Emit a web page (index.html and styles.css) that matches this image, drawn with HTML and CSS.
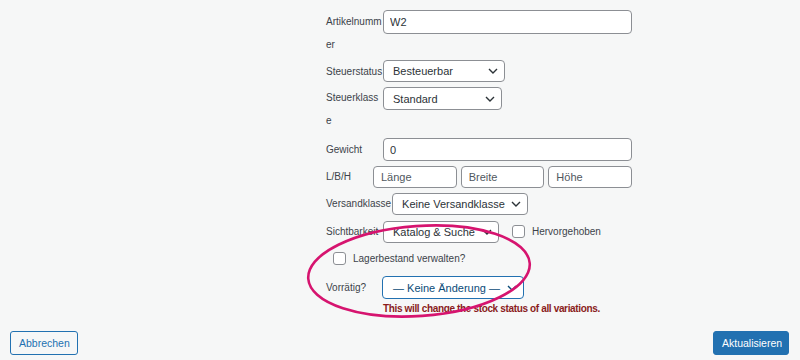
FILE: index.html
```html
<!DOCTYPE html>
<html lang="de">
<head>
<meta charset="utf-8">
<title>Variationen bearbeiten</title>
<link rel="stylesheet" href="styles.css">
</head>
<body>
<div class="page">
  <div class="form">
    <div class="row row--top row--sku">
      <label class="lbl">Artikelnummer</label>
      <input class="input input--full" type="text" value="W2">
    </div>
    <div class="row row--status">
      <label class="lbl">Steuerstatus</label>
      <div class="select select--status"><span>Besteuerbar</span><svg class="chev" width="10" height="6" viewBox="0 0 10 6"><polyline points="1,1 5,5 9,1"/></svg></div>
    </div>
    <div class="row row--top row--class">
      <label class="lbl">Steuerklasse</label>
      <div class="select select--class"><span>Standard</span><svg class="chev" width="10" height="6" viewBox="0 0 10 6"><polyline points="1,1 5,5 9,1"/></svg></div>
    </div>
    <div class="row row--weight">
      <label class="lbl">Gewicht</label>
      <input class="input input--full" type="text" value="0">
    </div>
    <div class="row row--dims">
      <label class="lbl lbl--auto">L/B/H</label>
      <div class="dims">
        <input class="input input--dim" type="text" placeholder="Länge">
        <input class="input input--dim" type="text" placeholder="Breite">
        <input class="input input--dim" type="text" placeholder="Höhe">
      </div>
    </div>
    <div class="row row--ship">
      <label class="lbl lbl--auto lbl--ship">Versandklasse</label>
      <div class="select select--ship"><span>Keine Versandklasse</span><svg class="chev" width="10" height="6" viewBox="0 0 10 6"><polyline points="1,1 5,5 9,1"/></svg></div>
    </div>
    <div class="row row--vis">
      <label class="lbl">Sichtbarkeit</label>
      <div class="select select--vis"><span>Katalog &amp; Suche</span><svg class="chev" width="10" height="6" viewBox="0 0 10 6"><polyline points="1,1 5,5 9,1"/></svg></div>
      <span class="check check--featured"></span>
      <span class="check-text">Hervorgehoben</span>
    </div>
    <div class="row row--stock">
      <span class="check"></span>
      <span class="check-text">Lagerbestand verwalten?</span>
    </div>
    <div class="row row--instock">
      <label class="lbl lbl--stock">Vorrätig?</label>
      <div class="select select--focus"><span>— Keine Änderung —</span><svg class="chev" width="10" height="6" viewBox="0 0 10 6"><polyline points="1,1 5,5 9,1"/></svg></div>
    </div>
    <p class="note">This will change the stock status of all variations.</p>
  </div>
  <div class="footer">
    <button class="btn btn--secondary" type="button">Abbrechen</button>
    <button class="btn btn--primary" type="button">Aktualisieren</button>
  </div>
  <svg class="annotation" width="800" height="360" viewBox="0 0 800 360">
    <ellipse cx="419" cy="271" rx="111" ry="45" transform="rotate(-4 419 271)"/>
  </svg>
</div>
</body>
</html>
```

FILE: styles.css
```css
html, body {
  margin: 0;
  padding: 0;
}

body {
  background: #f6f7f7;
  font-family: "Liberation Sans", Arial, sans-serif;
  color: #3c434a;
}

.page {
  position: relative;
  height: 360px;
  display: flex;
  flex-direction: column;
  overflow: hidden;
}

.form {
  width: 306px;
  margin-left: 326px;
  padding-top: 10px;
  display: flex;
  flex-direction: column;
  flex: 1;
}

.row {
  display: flex;
  align-items: center;
}

.row--top {
  align-items: flex-start;
}

.row--sku { margin-bottom: 4px; }
.row--status { height: 22px; margin-bottom: 4px; }
.row--class { margin-bottom: 6px; }
.row--weight { margin-bottom: 4px; }
.row--dims { margin-bottom: 4px; }
.row--ship { margin-bottom: 5px; }
.row--stock { margin-top: 9px; padding-left: 7px; height: 13px; }
.row--instock { margin-top: 11px; }

.lbl {
  width: 57px;
  flex: none;
  font-size: 10px;
  line-height: 23px;
  color: #3c434a;
  overflow-wrap: anywhere;
  word-break: break-all;
}

.lbl--auto {
  width: auto;
  word-break: normal;
  overflow-wrap: normal;
}

.lbl--ship {
  margin-right: 1px;
}

.lbl--stock {
  width: 56px;
}

.input {
  box-sizing: border-box;
  height: 24px;
  margin: 0;
  border: 1px solid #8c8f94;
  border-radius: 4px;
  background: #fff;
  font-family: "Liberation Sans", Arial, sans-serif;
  font-size: 11px;
  color: #2c3338;
  padding: 0 6px;
  outline: none;
}

.input::placeholder {
  color: #50575e;
}

.input--full {
  flex: 1;
  min-width: 0;
}

.row--weight .input {
  height: 23px;
}

.dims {
  margin-left: auto;
  width: 259px;
  display: flex;
  gap: 4px;
}

.input--dim {
  flex: 1;
  min-width: 0;
  height: 22px;
  padding: 0 7px;
}

.select {
  box-sizing: border-box;
  display: flex;
  align-items: center;
  justify-content: space-between;
  height: 23px;
  border: 1px solid #8c8f94;
  border-radius: 4px;
  background: #fff;
  font-size: 11px;
  color: #2c3338;
  padding: 0 6px 0 9px;
  white-space: nowrap;
}

.row--status .select { height: 22px; }
.row--class .select { margin-top: 1px; }

.select--status { width: 122px; }
.select--class { width: 119px; }
.select--ship { width: 136px; height: 22px; }
.select--vis { width: 116px; height: 22px; }

.select--focus {
  width: 142px;
  border-color: #2271b1;
  color: #0a4b78;
  padding-left: 10px;
}

.chev {
  flex: none;
}

.chev polyline {
  fill: none;
  stroke: #2c3338;
  stroke-width: 1.4;
}

.select--focus .chev polyline {
  stroke: #0a4b78;
}

.check {
  box-sizing: border-box;
  width: 13px;
  height: 13px;
  flex: none;
  border: 1px solid #8c8f94;
  border-radius: 3px;
  background: #fff;
}

.check--featured {
  margin-left: 13px;
}

.check-text {
  margin-left: 7px;
  font-size: 10px;
  color: #3c434a;
}

.note {
  margin: 3px 0 0 57px;
  font-size: 10px;
  line-height: 14px;
  font-weight: bold;
  letter-spacing: -0.35px;
  color: #8a1c1c;
}

.footer {
  display: flex;
  justify-content: space-between;
  align-items: flex-end;
  padding: 0 11px 5px 10px;
}

.btn {
  box-sizing: border-box;
  height: 24px;
  padding: 0 8px;
  border-radius: 3px;
  font-family: "Liberation Sans", Arial, sans-serif;
  font-size: 10.5px;
  cursor: pointer;
}

.btn--secondary {
  width: 68px;
  background: #f6f7f7;
  border: 1px solid #2271b1;
  color: #2271b1;
}

.btn--primary {
  width: 76px;
  background: #2271b1;
  border: 1px solid #2271b1;
  color: #fff;
}

.annotation {
  position: absolute;
  left: 0;
  top: 0;
  pointer-events: none;
}

.annotation ellipse {
  fill: none;
  stroke: #d6146f;
  stroke-width: 2.6;
}
```
